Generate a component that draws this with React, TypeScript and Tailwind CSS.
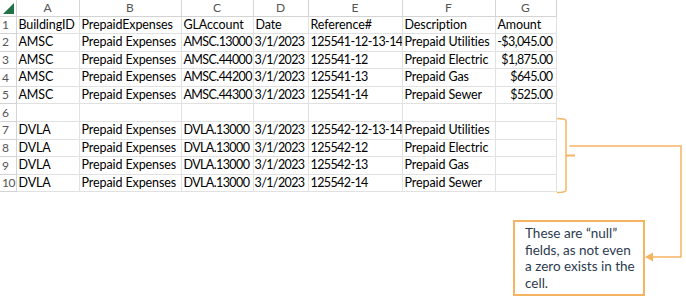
import React from "react";

const cols = [16, 63, 102, 72, 55, 94, 93, 61];
const letters = ["A", "B", "C", "D", "E", "F", "G"];

type Row = string[] | null;
const rows: Row[] = [
  ["BuildingID", "PrepaidExpenses", "GLAccount", "Date", "Reference#", "Description", "Amount"],
  ["AMSC", "Prepaid Expenses", "AMSC.13000", "3/1/2023", "125541-12-13-14", "Prepaid Utilities", "-$3,045.00"],
  ["AMSC", "Prepaid Expenses", "AMSC.44000", "3/1/2023", "125541-12", "Prepaid Electric", "$1,875.00"],
  ["AMSC", "Prepaid Expenses", "AMSC.44200", "3/1/2023", "125541-13", "Prepaid Gas", "$645.00"],
  ["AMSC", "Prepaid Expenses", "AMSC.44300", "3/1/2023", "125541-14", "Prepaid Sewer", "$525.00"],
  null,
  ["DVLA", "Prepaid Expenses", "DVLA.13000", "3/1/2023", "125542-12-13-14", "Prepaid Utilities", ""],
  ["DVLA", "Prepaid Expenses", "DVLA.13000", "3/1/2023", "125542-12", "Prepaid Electric", ""],
  ["DVLA", "Prepaid Expenses", "DVLA.13000", "3/1/2023", "125542-13", "Prepaid Gas", ""],
  ["DVLA", "Prepaid Expenses", "DVLA.13000", "3/1/2023", "125542-14", "Prepaid Sewer", ""],
];

const numericCols = [2, 3, 4, 6];

export default function App() {
  return (
    <div className="relative w-[686px] h-[300px] bg-white overflow-hidden" style={{ fontFamily: "Lato, 'Open Sans', sans-serif" }}>
      <table className="border-collapse table-fixed text-[12.5px] text-black leading-none" style={{ width: 556 }}>
        <colgroup>
          {cols.map((w, i) => (
            <col key={i} style={{ width: w }} />
          ))}
        </colgroup>
        <thead>
          <tr className="h-[16px]">
            <th className="relative border-r border-b border-[#d4d4d4] p-0">
              <svg className="absolute left-[3px] top-[3px]" width="11" height="11" viewBox="0 0 11 11">
                <polygon points="11,0 11,11 0,11" fill="#217346" />
              </svg>
            </th>
            {letters.map((l) => (
              <th key={l} className="border-r border-b border-[#d4d4d4] p-0 font-normal text-center text-[12px] text-[#555]">
                {l}
              </th>
            ))}
          </tr>
        </thead>
        <tbody>
          {rows.map((r, ri) => (
            <tr key={ri} className="h-[17.6px]">
              <td className="border-r border-b border-[#d4d4d4] pl-[2px] p-0 text-[12px] tracking-[-0.5px] text-[#555] whitespace-nowrap">{ri + 1}</td>
              {letters.map((_, ci) => {
                const v = r ? r[ci] : "";
                const right = ri > 0 && (ci === 3 || ci === 6);
                const numeric = ri > 0 && numericCols.includes(ci);
                return (
                  <td
                    key={ci}
                    className={
                      "border-r border-b border-[#e1e1e1] py-0 whitespace-nowrap overflow-hidden " +
                      (numeric ? "tracking-[-0.6px] " : "tracking-[-0.1px] ") +
                      (right ? "text-right pr-[3px] pl-0" : "text-left pl-[2px] pr-0")
                    }
                  >
                    {v}
                  </td>
                );
              })}
            </tr>
          ))}
        </tbody>
      </table>

      <svg className="absolute left-0 top-0 pointer-events-none" width="686" height="300" viewBox="0 0 686 300">
        <g fill="none" stroke="#f5b461" strokeWidth="1.5">
          <path d="M557 118.5 Q566 118.5 566 121 L566 190 Q566 192.5 557 192.5" />
          <path d="M566 155.5 L575 155.5" strokeWidth="2" />
          <path d="M569.5 146 L681 146 L681 257 L652 257" />
        </g>
        <polygon points="645,257 653,252.5 653,261.5" fill="#f5b461" />
      </svg>

      <div
        className="absolute left-[513px] top-[220px] w-[132px] h-[76px] border-2 border-[#f5b461] bg-white pl-[10px] pt-[3px] text-[13.5px] leading-[16.6px] text-[#2c3b4f]"
        style={{ fontFamily: "Lato, sans-serif" }}
      >
        These are “null”
        <br />
        fields, as not even
        <br />
        a zero exists in the
        <br />
        cell.
      </div>
    </div>
  );
}
